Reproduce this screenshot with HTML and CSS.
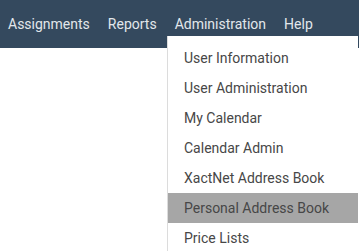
FILE: index.html
```html
<!DOCTYPE html>
<html lang="en">
<head>
  <meta charset="UTF-8" />
  <title>Administration</title>
  <link rel="stylesheet" href="styles.css">
</head>
<body>
  <header class="topbar">
    <nav class="navbar">
      <a class="nav-link" href="#">Assignments</a>
      <a class="nav-link" href="#">Reports</a>
      <a class="nav-link" href="#">Administration</a>
      <a class="nav-link" href="#">Help</a>
    </nav>
    <div class="menu">
      <a class="menu-item" href="#">User Information</a>
      <a class="menu-item" href="#">User Administration</a>
      <a class="menu-item" href="#">My Calendar</a>
      <a class="menu-item" href="#">Calendar Admin</a>
      <a class="menu-item" href="#">XactNet Address Book</a>
      <a class="menu-item current" href="#">Personal Address Book</a>
      <a class="menu-item" href="#">Price Lists</a>
    </div>
  </header>
</body>
</html>
```

FILE: styles.css
```css
html, body {
  min-height: 100vh;
}

body {
  margin: 0;
  font-family: Roboto, "Liberation Sans", sans-serif;
  background: #fff;
}

.topbar {
  position: relative;
}

.navbar {
  display: flex;
  gap: 18px;
  align-items: center;
  height: 48px;
  padding-left: 8px;
  background: #34495e;
}

.nav-link {
  color: #e2e7eb;
  font-size: 14px;
  text-decoration: none;
}

.menu {
  position: absolute;
  top: 36px;
  left: 167px;
  width: 190px;
  padding-top: 7px;
  background: #fff;
  border-left: 1px solid #dcdcdc;
}

.menu-item {
  display: block;
  height: 30px;
  padding-left: 16px;
  line-height: 30px;
  font-size: 14px;
  color: #474747;
  text-decoration: none;
}

.menu-item.current {
  background: #a6a6a6;
}
```
